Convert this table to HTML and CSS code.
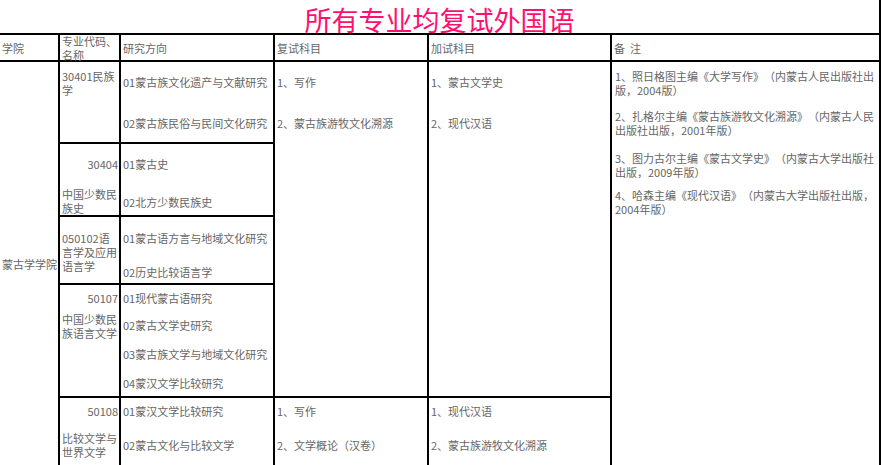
FILE: index.html
```html
<!DOCTYPE html>
<html lang="zh-CN">
<head>
<meta charset="utf-8">
<title>所有专业均复试外国语</title>
<link rel="stylesheet" href="styles.css">
</head>
<body>
<div class="sheet">
  <div class="title">所有专业均复试外国语</div>

  <div class="cell head">学院</div>
  <div class="cell head">专业代码、<br>名称</div>
  <div class="cell head">研究方向</div>
  <div class="cell head">复试科目</div>
  <div class="cell head">加试科目</div>
  <div class="cell head">备&nbsp;&nbsp;注</div>

  <!-- row A -->
  <div class="cell span5 college">蒙古学学院</div>
  <div class="cell pt7"><p>30401民族<br>学</p></div>
  <div class="cell pt13">
    <p>01蒙古族文化遗产与文献研究</p>
    <p class="m27">02蒙古族民俗与民间文化研究</p>
  </div>
  <div class="cell span4 pt13">
    <p>1、写作</p>
    <p class="m27">2、蒙古族游牧文化溯源</p>
  </div>
  <div class="cell span4 pt13">
    <p>1、蒙古文学史</p>
    <p class="m27">2、现代汉语</p>
  </div>
  <div class="cell span5 pt7 notes">
    <p>1、照日格图主编《大学写作》（内蒙古人民出版社出<br>版，2004版）</p>
    <p class="m12">2、扎格尔主编《蒙古族游牧文化溯源》（内蒙古人民<br>出版社出版，2001年版）</p>
    <p class="m14">3、图力古尔主编《蒙古文学史》（内蒙古大学出版社<br>出版，2009年版）</p>
    <p class="m9">4、哈森主编《现代汉语》（内蒙古大学出版社出版，<br>2004年版）</p>
  </div>

  <!-- row B -->
  <div class="cell pt13">
    <p class="code">30404</p>
    <p class="m16">中国少数民<br>族史</p>
  </div>
  <div class="cell pt13">
    <p>01蒙古史</p>
    <p class="m24">02北方少数民族史</p>
  </div>

  <!-- row C -->
  <div class="cell pt14"><p>050102语<br>言学及应用<br>语言学</p></div>
  <div class="cell pt14">
    <p>01蒙古语方言与地域文化研究</p>
    <p class="m20">02历史比较语言学</p>
  </div>

  <!-- row D -->
  <div class="cell pt6">
    <p class="code">50107</p>
    <p class="m7">中国少数民<br>族语言文学</p>
  </div>
  <div class="cell pt6">
    <p>01现代蒙古语研究</p>
    <p class="m13">02蒙古文学史研究</p>
    <p class="m15">03蒙古族文学与地域文化研究</p>
    <p class="m15">04蒙汉文学比较研究</p>
  </div>

  <!-- row E -->
  <div class="cell pt6">
    <p class="code">50108</p>
    <p class="m13">比较文学与<br>世界文学</p>
  </div>
  <div class="cell pt6">
    <p>01蒙汉文学比较研究</p>
    <p class="m20">02蒙古文化与比较文学</p>
  </div>
  <div class="cell pt6">
    <p>1、写作</p>
    <p class="m20">2、文学概论（汉卷）</p>
  </div>
  <div class="cell pt6">
    <p>1、现代汉语</p>
    <p class="m20">2、蒙古族游牧文化溯源</p>
  </div>
</div>
</body>
</html>
```

FILE: styles.css
```css
html, body {
  margin: 0;
  padding: 0;
  overflow: hidden;
  background: #fff;
}

body {
  font-family: "Noto Sans CJK SC", "Noto Sans", sans-serif;
  font-size: 11px;
  line-height: 14px;
  color: #666;
  text-spacing-trim: space-all;
  font-kerning: none;
}

p {
  margin: 0;
}

.sheet {
  display: grid;
  width: 881px;
  grid-template-columns: 60px 61px 154px 154px 183px 269px;
  grid-template-rows: 33px 29px 82px 73px 68px 113px 69px;
}

.title {
  grid-column: 1 / -1;
  box-sizing: border-box;
  border-right: 2px solid #000;
  padding-top: 6px;
  text-align: center;
  font-size: 27px;
  line-height: 27px;
  color: #ff0f6f;
  white-space: nowrap;
}

.cell {
  box-sizing: border-box;
  border-right: 2px solid #000;
  border-bottom: 2px solid #000;
  padding: 0 1px 0 2px;
  white-space: nowrap;
  overflow: visible;
}

.head {
  border-top: 2px solid #000;
  display: flex;
  flex-direction: column;
  justify-content: center;
}

.span4 { grid-row: span 4; }
.span5 { grid-row: span 5; }

.college {
  display: flex;
  align-items: center;
}

.notes {
  padding-left: 3px;
}

.code {
  text-align: right;
}

.pt6 { padding-top: 6px; }
.pt7 { padding-top: 7px; }
.pt13 { padding-top: 13px; }
.pt14 { padding-top: 14px; }

.m7 { margin-top: 7px; }
.m9 { margin-top: 9px; }
.m12 { margin-top: 12px; }
.m13 { margin-top: 13px; }
.m14 { margin-top: 14px; }
.m15 { margin-top: 15px; }
.m16 { margin-top: 16px; }
.m20 { margin-top: 20px; }
.m24 { margin-top: 24px; }
.m27 { margin-top: 27px; }
```
